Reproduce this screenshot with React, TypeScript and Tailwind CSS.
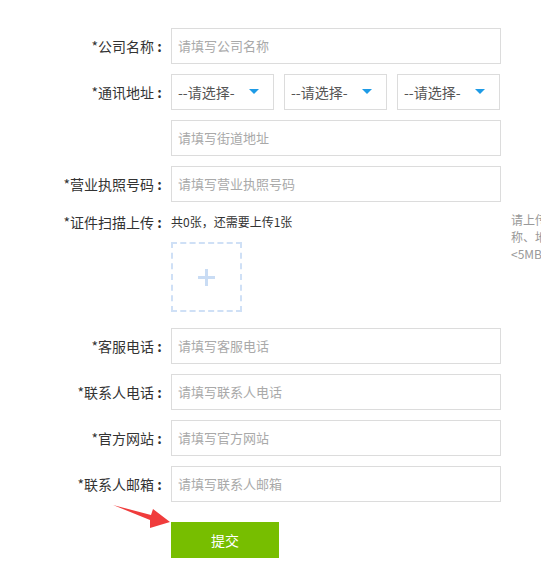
import React from "react";

const font = { fontFamily: '"Noto Sans CJK SC", "Noto Sans", sans-serif' };

function Label({ text }: { text: string }) {
  return (
    <div className="flex w-[168px] shrink-0 justify-end text-[14px] leading-[20px] text-[#333]">
      <span>{text}</span>
      <span className="inline-block w-[14px] pr-[3px] text-center font-bold">:</span>
    </div>
  );
}

function TextBox({ placeholder }: { placeholder: string }) {
  return (
    <div className="ml-[3px] flex h-[36px] w-[330px] items-center border border-[#dcdcdc] px-[6px] text-[13px] text-[#a9a9a9]">
      {placeholder}
    </div>
  );
}

function Select() {
  return (
    <div className="flex h-[36px] w-[103px] items-center justify-between border border-[#dcdcdc] pl-[6px] pr-[14px] text-[14px] text-[#555]">
      <span>--请选择-</span>
      <svg width="10" height="6" viewBox="0 0 10 6">
        <polygon points="0,0 10,0 5,5" fill="#1e9be6" />
      </svg>
    </div>
  );
}

function Row({ label, placeholder }: { label: string; placeholder: string }) {
  return (
    <div className="flex items-center">
      <Label text={label} />
      <TextBox placeholder={placeholder} />
    </div>
  );
}

export default function App() {
  return (
    <div
      className="relative h-[570px] w-[541px] overflow-hidden bg-white pt-[28px]"
      style={font}
    >
      <div className="flex flex-col gap-[10px]">
        <Row label="*公司名称" placeholder="请填写公司名称" />
        <div className="flex items-center">
          <Label text="*通讯地址" />
          <div className="ml-[3px] flex gap-[10px]">
            <Select />
            <Select />
            <Select />
          </div>
        </div>
        <div className="flex items-center pl-[168px]">
          <TextBox placeholder="请填写街道地址" />
        </div>
        <Row label="*营业执照号码" placeholder="请填写营业执照号码" />
        <div className="mb-[6px] flex items-start">
          <Label text="*证件扫描上传" />
          <div className="ml-[3px] w-[330px] shrink-0">
            <div className="text-[12px] leading-[20px] text-[#333]">共0张，还需要上传1张</div>
            <div className="mt-[10px] flex h-[70px] w-[71px] items-center justify-center border-2 border-dashed border-[#cfe0f6]">
              <svg width="17" height="17" viewBox="0 0 17 17">
                <rect x="0" y="7" width="17" height="3" fill="#c9dcf4" />
                <rect x="7" y="0" width="3" height="17" fill="#c9dcf4" />
              </svg>
            </div>
          </div>
          <div className="ml-[10px] -mt-[1px] shrink-0 whitespace-nowrap text-[12px] leading-[17px] text-[#999]">
            <div>请上传营业执照副本扫描件，公司名</div>
            <div>称、地址需清晰可见，图片大小</div>
            <div>&lt;5MB</div>
          </div>
        </div>
        <Row label="*客服电话" placeholder="请填写客服电话" />
        <Row label="*联系人电话" placeholder="请填写联系人电话" />
        <Row label="*官方网站" placeholder="请填写官方网站" />
        <Row label="*联系人邮箱" placeholder="请填写联系人邮箱" />
        <div className="mt-[10px] flex pl-[171px]">
          <button className="h-[36px] w-[108px] bg-[#77be00] text-[14px] text-white">
            提交
          </button>
        </div>
      </div>
      <svg
        className="absolute left-[105px] top-[495px]"
        width="70"
        height="35"
        viewBox="105 495 70 35"
      >
        <polygon
          points="113,505 151,515 153,509 170,522 150,528 150,520"
          fill="#f03c3c"
        />
      </svg>
    </div>
  );
}
